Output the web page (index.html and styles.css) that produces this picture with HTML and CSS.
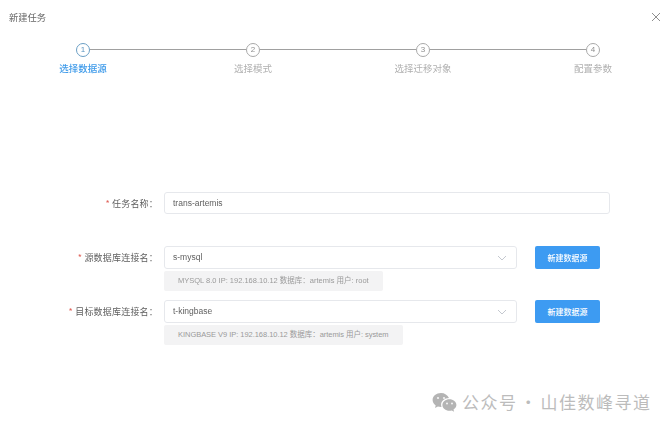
FILE: index.html
```html
<!DOCTYPE html>
<html lang="zh">
<head>
<meta charset="utf-8">
<title>新建任务</title>
<link rel="stylesheet" href="styles.css">
</head>
<body>
<main class="dialog">
  <header class="head">
    <h1 class="title">新建任务</h1>
    <svg class="close" width="10" height="10" viewBox="0 0 10 10"><path d="M1 1l8 8M9 1l-8 8" stroke="#8f8f8f" stroke-width="1" fill="none"/></svg>
  </header>
  <ol class="steps">
    <li class="step active"><span class="dot">1</span><span class="step-label">选择数据源</span></li>
    <li class="step"><span class="dot">2</span><span class="step-label">选择模式</span></li>
    <li class="step"><span class="dot">3</span><span class="step-label">选择迁移对象</span></li>
    <li class="step last"><span class="dot">4</span><span class="step-label">配置参数</span></li>
  </ol>
  <form class="form">
    <div class="row row-name">
      <label class="label"><i class="req">*</i> 任务名称：</label>
      <div class="field field-wide">trans-artemis</div>
    </div>
    <div class="row row-src">
      <label class="label"><i class="req">*</i> 源数据库连接名：</label>
      <div class="field field-select">s-mysql<svg class="chev" width="10" height="6" viewBox="0 0 10 6"><path d="M1 1l4 4 4-4" stroke="#c4c8cf" fill="none"/></svg></div>
      <button class="btn" type="button">新建数据源</button>
      <div class="hint">MYSQL 8.0 IP: 192.168.10.12 数据库：artemis 用户: root</div>
    </div>
    <div class="row row-dst">
      <label class="label"><i class="req">*</i> 目标数据库连接名：</label>
      <div class="field field-select">t-kingbase<svg class="chev" width="10" height="6" viewBox="0 0 10 6"><path d="M1 1l4 4 4-4" stroke="#c4c8cf" fill="none"/></svg></div>
      <button class="btn" type="button">新建数据源</button>
      <div class="hint">KINGBASE V9 IP: 192.168.10.12 数据库：artemis 用户: system</div>
    </div>
  </form>
</main>
<aside class="mark">
  <svg class="wechat" width="25" height="21" viewBox="0 0 25 21"><path fill="#b4b4b4" d="M9 1C4.300 1 .6 4.100.6 8c0 2.200 1.200 4.100 3.100 5.400L3 16l2.900-1.500c1 .3 2 .5 3.100.5h.5c-.3-.8-.4-1.500-.4-2.200 0-3.700 3.500-6.700 7.900-6.700C15.600 3.100 12.600 1 9 1z"/><path fill="#b4b4b4" d="M24.400 13c0-3.300-3.200-5.800-7-5.800-3.900 0-7 2.600-7 5.800s3.100 5.800 7 5.800c.8 0 1.600-.1 2.400-.4l2.300 1.300-.6-2.200c1.800-1.100 2.900-2.700 2.900-4.500z"/><circle cx="6" cy="6" r="1.100" fill="#f4f4f4"/><circle cx="12" cy="6" r="1.100" fill="#f4f4f4"/><circle cx="15" cy="11.500" r="1" fill="#f4f4f4"/><circle cx="20" cy="11.500" r="1" fill="#f4f4f4"/></svg>
  <span class="mark-text">公众号 · 山佳数峰寻道</span>
</aside>
</body>
</html>
```
FILE: styles.css
```css
* { box-sizing: border-box; }
html, body { margin: 0; height: 100%; }
body {
  background: #fff;
  font-family: "Noto Sans CJK SC", "Noto Sans", "Liberation Sans", sans-serif;
  color: #606266;
  overflow: hidden;
  position: relative;
}
.dialog { filter: blur(0.45px); }
.head {
  display: flex;
  justify-content: space-between;
  align-items: center;
  height: 34px;
  padding: 0 11px 0 9px;
}
.title { margin: 0; font-size: 9.25px; font-weight: 400; color: #666; }
.steps {
  list-style: none;
  display: flex;
  gap: 100px;
  margin: 9px 0 0 48px;
  padding: 0;
}
.step {
  position: relative;
  width: 70px;
  display: flex;
  flex-direction: column;
  align-items: center;
}
.step::after {
  content: "";
  position: absolute;
  left: 42px;
  top: 6px;
  width: 156px;
  height: 1px;
  background: #a0a0a0;
}
.step.last::after { display: none; }
.dot {
  width: 14px;
  height: 14px;
  border: 1px solid #a8a8a8;
  border-radius: 50%;
  font-size: 8px;
  line-height: 12px;
  text-align: center;
  color: #8f8f8f;
  font-family: "Liberation Sans", sans-serif;
}
.step-label { margin-top: 5px; font-size: 9.5px; line-height: 13px; color: #b0b0b0; white-space: nowrap; }
.active .dot { border-color: #6a9ec4; color: #5b94c0; }
.active .step-label { color: #3f9bea; font-weight: 500; }
.form { margin-top: 117px; }
.row {
  display: grid;
  grid-template-columns: 164px 353px 18px 65px;
  align-items: center;
}
.row-name { grid-template-columns: 164px 446px; }
.row-src { margin-top: 32px; }
.row-dst { margin-top: 9px; }
.label {
  font-size: 9px;
  text-align: right;
  padding-right: 6px;
  color: #5f5f5f;
  letter-spacing: 0.2px;
  white-space: nowrap;
}
.req { font-style: normal; color: #e0645c; }
.field {
  height: 23px;
  border: 1px solid #e6e8ec;
  border-radius: 3px;
  padding: 0 9px 0 8px;
  font-family: "Liberation Sans", "Noto Sans CJK SC", sans-serif;
  font-size: 8.5px;
  line-height: 21px;
  color: #5f5f5f;
}
.field-wide { height: 22px; line-height: 20px; }
.field-select {
  display: flex;
  justify-content: space-between;
  align-items: center;
}
.btn {
  grid-column: 4;
  height: 23px;
  border: 0;
  border-radius: 2px;
  background: #3d9bf2;
  color: #fff;
  font: 500 8px "Noto Sans CJK SC", sans-serif;
  padding: 0;
}
.hint {
  grid-column: 2 / 5;
  justify-self: start;
  height: 20px;
  margin-top: 2px;
  padding: 0 14px;
  background: #f3f3f4;
  border-radius: 2px;
  color: #9a9a9a;
  font-family: "Liberation Sans", "Noto Sans CJK SC", sans-serif;
  font-size: 7.5px;
  line-height: 20px;
  white-space: nowrap;
}
.row-dst .hint { letter-spacing: -0.04px; }
.mark {
  position: absolute;
  left: 432px;
  top: 391px;
  display: flex;
  align-items: center;
  gap: 5px;
}
.mark-text { font-size: 17px; line-height: 22px; letter-spacing: 1.5px; word-spacing: -3px; color: #bcbcbc; white-space: nowrap; }
```
